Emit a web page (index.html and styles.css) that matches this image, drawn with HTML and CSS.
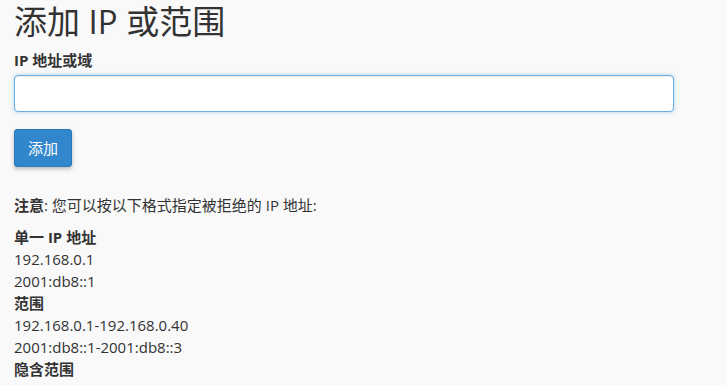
FILE: index.html
```html
<!DOCTYPE html>
<html lang="zh-CN">
<head>
<meta charset="utf-8">
<link rel="stylesheet" href="styles.css">
</head>
<body>
<div class="page">
  <h1 class="title">添加 IP 或范围</h1>
  <form class="form">
    <label class="label" for="ip">IP 地址或域</label>
    <input class="input" id="ip" type="text">
    <button class="btn" type="button">添加</button>
  </form>
  <p class="note"><strong>注意</strong>: 您可以按以下格式指定被拒绝的 IP 地址:</p>
  <div class="examples">
    <div class="head">单一 IP 地址</div>
    <div class="line">192.168.0.1</div>
    <div class="line">2001:db8::1</div>
    <div class="head">范围</div>
    <div class="line">192.168.0.1-192.168.0.40</div>
    <div class="line">2001:db8::1-2001:db8::3</div>
    <div class="head">隐含范围</div>
  </div>
</div>
</body>
</html>
```

FILE: styles.css
```css
html, body {
  margin: 0;
  padding: 0;
  background: #f9f9f9;
}
body {
  font-family: "Open Sans", "Noto Sans CJK SC", sans-serif;
  font-size: 15px;
  color: #333;
  line-height: 22px;
}
.page {
  padding: 0 14px;
}
.title {
  margin: 0;
  font-size: 33px;
  font-weight: 400;
  line-height: 44px;
  height: 46px;
}
.form {
  display: flex;
  flex-direction: column;
  align-items: flex-start;
}
.label {
  font-size: 15px;
  font-weight: 700;
  line-height: 22px;
  margin-top: 3px;
  margin-bottom: 4px;
}
.input {
  box-sizing: border-box;
  width: 660px;
  height: 37px;
  margin: 0;
  border: 1px solid #66afe9;
  border-radius: 4px;
  background: #fff;
  box-shadow: inset 0 1px 1px rgba(0,0,0,.075), 0 0 4px rgba(102,175,233,.5);
  outline: none;
  font: inherit;
}
.btn {
  margin-top: 17px;
  width: 58px;
  height: 38px;
  border: 1px solid #2a79b8;
  border-radius: 3px;
  background: #3287cc;
  color: #fff;
  font: inherit;
  font-size: 15px;
  padding: 0;
  box-shadow: 0 2px 4px rgba(0,0,0,.25);
}
.note {
  margin: 27px 0 0;
  line-height: 22px;
}
.examples {
  margin-top: 10px;
}
.head {
  font-weight: 700;
}
```
